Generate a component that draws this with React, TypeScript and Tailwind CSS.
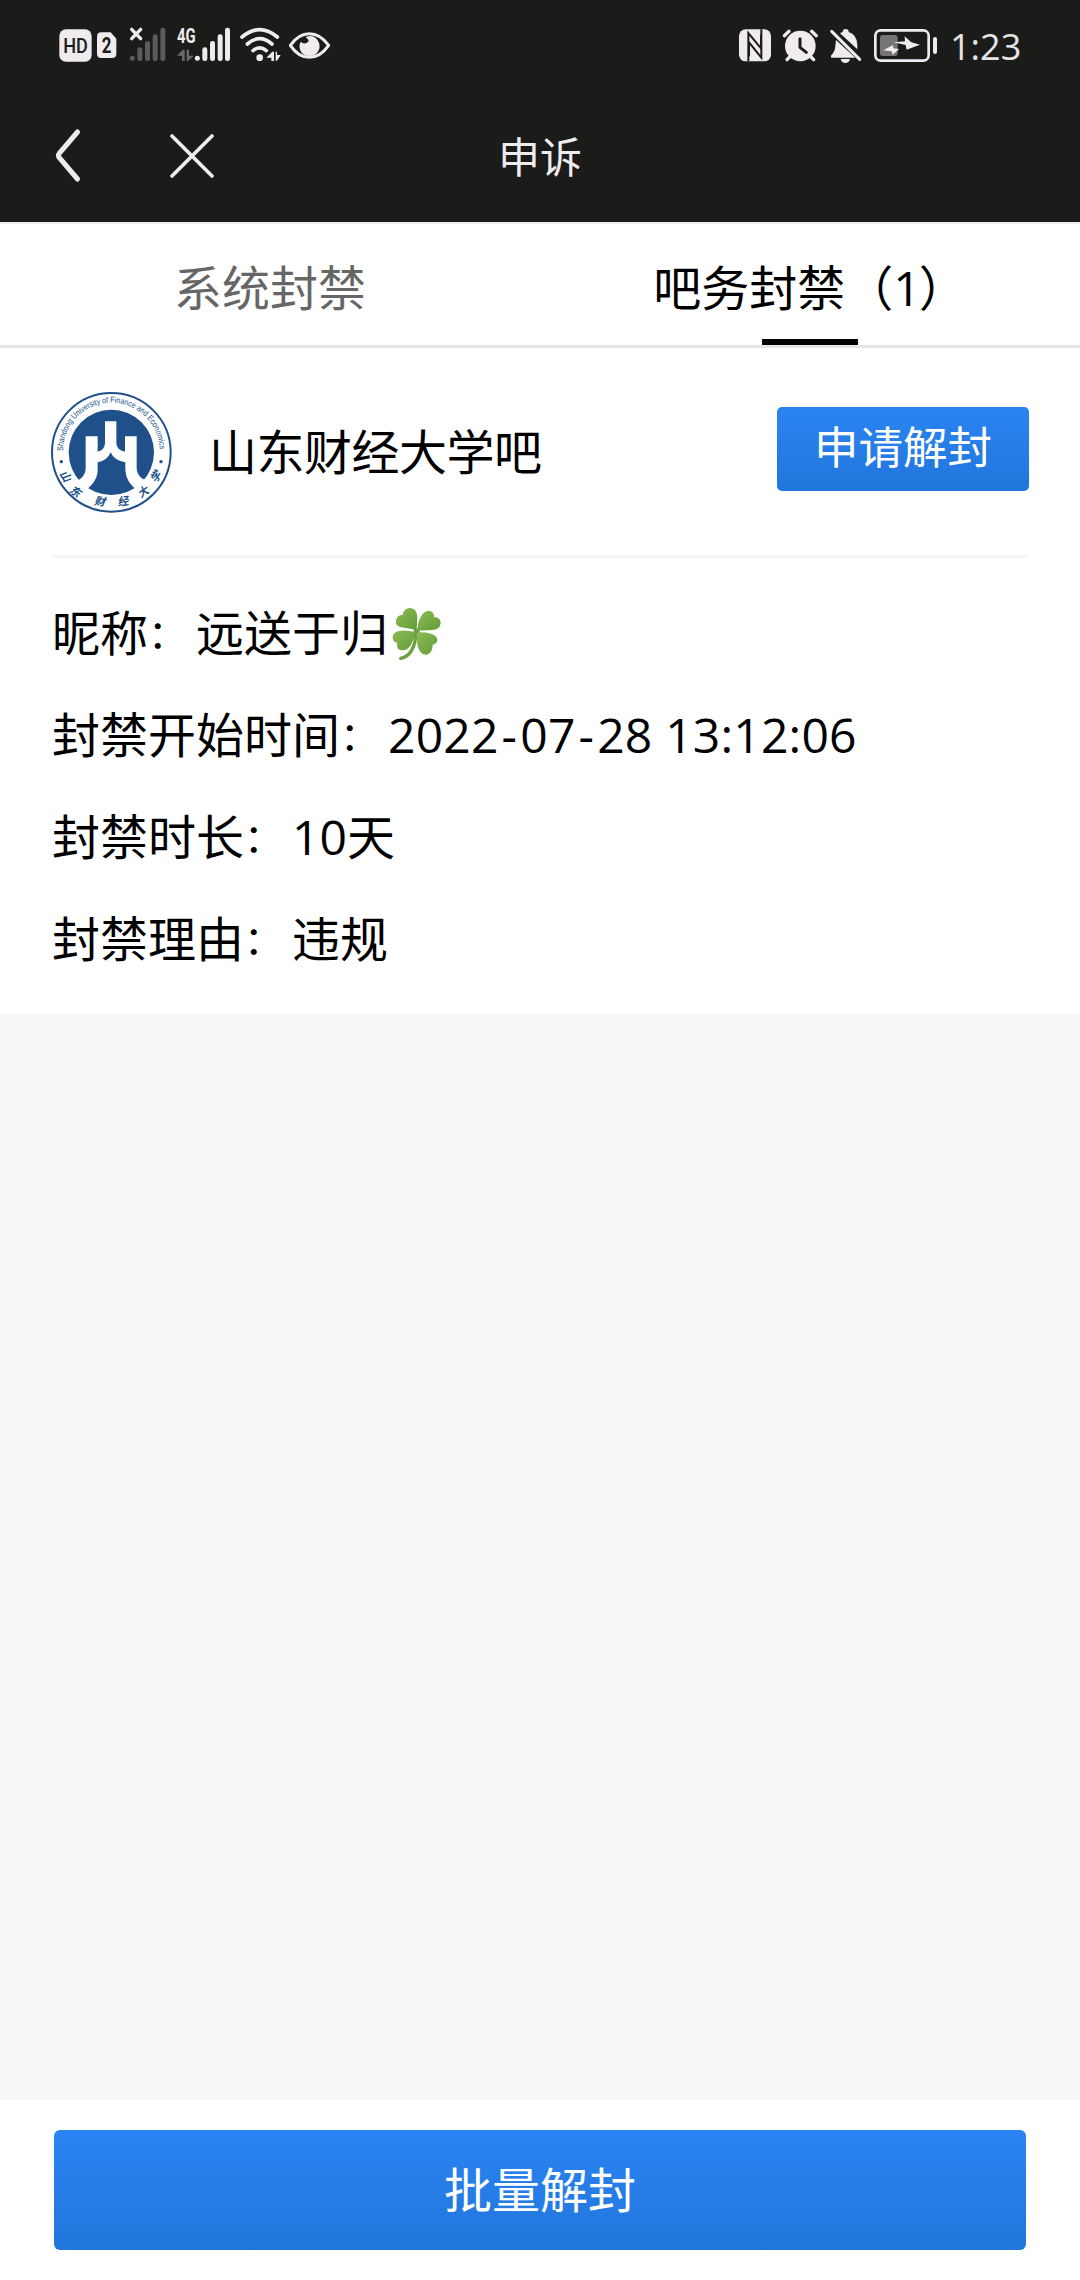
import type { ReactNode } from 'react';

interface StatusIconProps {
	label: string;
	viewBox: string;
	className: string;
	children: ReactNode;
}

function StatusIcon({ label, viewBox, className, children }: StatusIconProps) {
	return (
		<svg aria-label={label} viewBox={viewBox} className={`h-[60px] shrink-0 ${className}`} fill="#efebef">
			{children}
		</svg>
	);
}

function StatusBar() {
	return (
		<div className="flex items-start justify-between h-20 pt-[15px] pl-[57px] pr-[60px]">
			<div className="flex">
				<StatusIcon label="HD" viewBox="51 0 111 180" className="w-[37px]">
					<rect x="58" y="43" width="97" height="97" rx="20" />
					<text x="106.500" y="114" textAnchor="middle" textLength="74" lengthAdjust="spacingAndGlyphs" fontFamily="Roboto, sans-serif" fontWeight="500" fontSize="58" fill="#1b1c1a">HD</text>
				</StatusIcon>
				<StatusIcon label="SIM 2" viewBox="162 0 87 180" className="w-[29px]">
					<path d="M184 52h28l17 19v45q0 13-13 13h-32q-13 0-13-13V65q0-13 13-13z" />
					<text x="200" y="115" textAnchor="middle" fontFamily="Roboto, sans-serif" fontWeight="700" fontSize="64" textLength="29" lengthAdjust="spacingAndGlyphs" fill="#1b1c1a">2</text>
				</StatusIcon>
				<StatusIcon label="No signal" viewBox="249 0 144 180" className="w-[48px]">
					<g fill="#5b5b5a">
						<circle cx="277" cy="130" r="7.500" />
						<rect x="292" y="97" width="15" height="41" rx="7" />
						<rect x="315" y="78" width="15" height="60" rx="7" />
						<rect x="338" y="58" width="15" height="80" rx="7" />
						<rect x="361" y="38" width="15" height="100" rx="7" />
					</g>
					<path d="M275 43l27 28M302 43l-27 28" stroke="#efebef" strokeWidth="10" strokeLinecap="round" />
				</StatusIcon>
				<StatusIcon label="4G" viewBox="393 0 192 180" className="w-[64px]">
					<text x="411" y="83" textLength="56" lengthAdjust="spacingAndGlyphs" fontFamily="Roboto, sans-serif" fontWeight="700" fontSize="60">4G</text>
					<path d="M411 122l18-18h5v34h-8v-16zM440 104h7v18h14l-17 16h-4z" fill="#6b6a6b" />
					<circle cx="472" cy="130" r="7.500" />
					<rect x="487" y="97" width="15" height="41" rx="7" />
					<rect x="510" y="78" width="15" height="60" rx="7" />
					<rect x="533" y="58" width="15" height="80" rx="7" />
					<rect x="555" y="38" width="15" height="100" rx="7" />
				</StatusIcon>
				<StatusIcon label="Wi-Fi" viewBox="585 0 150 180" className="w-[50px]">
					<g fill="none" stroke="#efebef" strokeWidth="11" strokeLinecap="round">
						<path d="M606 66q53-44 106 0" />
						<path d="M622 87q37-32 74 0" />
						<path d="M639 107q20-17 40 0" />
					</g>
					<circle cx="659" cy="128" r="10" />
					<path d="M679 128l18-18h5v28h-8v-10zM707 110h4v10h11l-11 17h-4z" />
				</StatusIcon>
				<StatusIcon label="Eye comfort" viewBox="735 0 150 180" className="w-[50px]">
					<path d="M751 91q24-35 57-35t58 35q-25 36-58 36t-57-36z" fill="none" stroke="#efebef" strokeWidth="9" strokeLinejoin="round" />
					<path d="M797 67q18-9 31 3t10 31q-6 20-28 22-22 0-30-19-4-16 3-24 6 8 17 4 13-6-3-17z" />
				</StatusIcon>
			</div>

			<div className="flex">
				<StatusIcon label="NFC" viewBox="51 0 120 180" className="w-[40px]">
					<rect x="57" y="43" width="96" height="96" rx="20" />
					<path d="M85 139V54l38 46V59" fill="none" stroke="#1b1c1a" strokeWidth="6" />
					<path d="M124 43v85L87 82v42" fill="none" stroke="#1b1c1a" strokeWidth="6" />
				</StatusIcon>
				<StatusIcon label="Alarm" viewBox="171 0 141 180" className="w-[47px]">
					<circle cx="241" cy="93" r="46" />
					<path d="M193 62l14-13M289 62l-14-13M201 134l14-14M281 134l-14-14" stroke="#efebef" strokeWidth="10" strokeLinecap="round" />
					<path d="M240 71v26l19 15" fill="none" stroke="#1b1c1a" strokeWidth="9" strokeLinecap="round" strokeLinejoin="round" />
				</StatusIcon>
				<StatusIcon label="Muted" viewBox="312 0 132 180" className="w-[44px]">
					<path d="M348 75l58 53h-72q-4-6 4-12 8-9 8-22zM360 55q4-3 8-4 0-9 9-9t9 9q25 8 26 38v14z" />
					<path d="M362 132h28q-3 12-14 12t-14-12z" />
					<path d="M335 49l84 84" stroke="#efebef" strokeWidth="9" strokeLinecap="round" />
				</StatusIcon>
				<StatusIcon label="Charging" viewBox="444 0 228 180" className="w-[76px]">
					<rect x="466" y="46" width="160" height="91" rx="16" fill="none" stroke="#efebef" strokeWidth="8" />
					<rect x="480" y="60" width="53" height="63" rx="8" fill="#777478" />
					<rect x="639" y="66" width="12" height="51" rx="6" />
					<path d="M490 106l29-16 1 10 17 2-19 17-3-10z" />
					<path d="M521 82l34-3-1-15 20 18 26 7-40 15-3-14z" />
				</StatusIcon>
				<span className="w-[76px] h-[60px] pl-[6px] leading-[63px] text-[36px] text-[#e6e3e6] whitespace-nowrap font-['Open_Sans',sans-serif]">1:23</span>
			</div>
		</div>
	);
}

function NavBar() {
	return (
		<div className="relative flex items-start h-[142px] pt-[46px] pl-[50px]">
			<button aria-label="返回" className="w-9 h-[60px]">
				<svg viewBox="0 0 36 60" className="w-full h-full" fill="none" stroke="#efebee" strokeWidth="5" strokeLinecap="round">
					<path d="M27.500 6L9.500 27Q7.500 29.500 9.500 32L27.500 53" />
				</svg>
			</button>
			<button aria-label="关闭" className="w-[60px] h-[60px] ml-[76px]">
				<svg viewBox="0 0 60 60" className="w-full h-full" fill="none" stroke="#efebee" strokeWidth="3.700" strokeLinecap="round">
					<path d="M10 10l40 40M50 10L10 50" />
				</svg>
			</button>
			<h1 className="absolute inset-x-0 top-[47px] text-center text-[42px] leading-[60px] text-[#efebee]">申诉</h1>
		</div>
	);
}

const sealLetters = [
	{ char: '山', x: 76, y: 285, rotate: 55 },
	{ char: '东', x: 106, y: 331, rotate: 35 },
	{ char: '财', x: 179, y: 361, rotate: 8 },
	{ char: '经', x: 249, y: 361, rotate: -8 },
	{ char: '大', x: 309, y: 333, rotate: -35 },
	{ char: '学', x: 347, y: 287, rotate: -55 },
];

function SchoolSeal() {
	return (
		<svg viewBox="30 30 366 366" className="w-[122px] h-[122px] shrink-0" fill="#20508a">
			<circle cx="214" cy="214" r="178" fill="#fff" stroke="#20508a" strokeWidth="6" />
			<circle cx="214" cy="214" r="128" />
			<path
				fill="#fff"
				d="M137 166h36v46q22-6 22-27v-64h34v64q0 21 26 27v-46h35v96q2 32 40 40l-32 30q-42-28-42-66v-22q-34-5-44-30-10 25-39 30v22q0 38-43 66l-34-26q40-12 41-44z"
			/>
			<circle cx="64" cy="242" r="5" />
			<circle cx="363" cy="242" r="5" />
			<path id="seal-arc" d="M69 210A145 145 0 0 1 359 210" fill="none" />
			<text fontFamily="Liberation Sans, sans-serif" fontSize="25" textLength="450" lengthAdjust="spacingAndGlyphs">
				<textPath href="#seal-arc">Shandong University of Finance and Economics</textPath>
			</text>
			{sealLetters.map(({ char, x, y, rotate }) => (
				<text key={char} x={x} y={y + 12} textAnchor="middle" fontSize="33" fontWeight="700" fontStyle="italic" transform={`rotate(${rotate} ${x} ${y})`}>
					{char}
				</text>
			))}
		</svg>
	);
}

function Clover() {
	return (
		<svg aria-label="🍀" viewBox="24 8 162 180" className="w-[54px] h-[60px]">
			<defs>
				<linearGradient id="leaf" x1="0" y1="0" x2="1" y2="1">
					<stop offset="0" stopColor="#8dbd52" />
					<stop offset="1" stopColor="#629a3b" />
				</linearGradient>
			</defs>
			<path d="M107 98q0 32-12 52-12 20-33 24" fill="none" stroke="#6d9f45" strokeWidth="10" strokeLinecap="round" />
			<circle cx="110" cy="93" r="9" fill="#6d9f45" />
			<g fill="url(#leaf)">
				<path d="M109 89q-20-4-46-8-18-4-15-21 3-16 20-17 4-20 22-20 20 1 22 26 0 22-3 40z" />
				<path d="M112 90q0-22 10-40 10-20 27-19 14 4 13 19 20 2 20 18-2 20-25 21-22 2-45 1z" />
				<path d="M107 96q-21-6-43-5-24 1-26 18-1 16 14 18-4 18 9 22 20 4 32-16 8-14 14-37z" />
				<path d="M113 96q22-1 40 4 20 6 19 20-2 12-14 13 0 24-17 30-18 3-27-22-6-20-1-45z" />
			</g>
		</svg>
	);
}

interface InfoRowProps {
	label: string;
	children: ReactNode;
}

function InfoRow({ label, children }: InfoRowProps) {
	return (
		<div className="flex items-center h-[102px] whitespace-nowrap">
			<span>{label}</span>
			<span className="w-12 text-[39px]">：</span>
			{children}
		</div>
	);
}

function DateText({ value }: { value: string }) {
	const parts = value.split('-');

	return (
		<span className="tracking-[0.2px]">
			{parts.map((part, i) => (
				<span key={i}>
					{i > 0 && <span className="mx-[3px]">-</span>}
					{part}
				</span>
			))}
		</span>
	);
}

export default function App() {
	return (
		<div className="flex flex-col h-[2280px] w-[1080px] bg-[#f7f7f7] text-black text-[48px] font-['Open_Sans','Noto_Sans_CJK_SC',sans-serif]">
			<header className="bg-[#1b1c1a]">
				<StatusBar />
				<NavBar />
			</header>

			<nav className="flex h-[126px] bg-white border-t-[2px] border-t-[#f0eef0] border-b-[3px] border-b-[#e6e6e6]">
				<button className="flex-1 leading-[128px] h-[121px] text-[#666]">系统封禁</button>
				<button className="relative flex-1 leading-[128px] h-[121px]">
					吧务封禁（1<span className="-ml-[2px]">）</span>
					<span className="absolute bottom-0 left-1/2 -translate-x-1/2 w-24 h-[6px] bg-black" />
				</button>
			</nav>

			<main className="h-[666px] px-[52px] bg-white">
				<div className="flex items-center h-[210px] border-b-[3px] border-[#f5f5f5]">
					<div className="-ml-[2px]">
						<SchoolSeal />
					</div>
					<h2 className="flex-1 ml-[37px] tracking-[-0.5px]">山东财经大学吧</h2>
					<button className="w-[252px] h-[84px] mb-[6px] -mr-px rounded-[5px] bg-linear-to-b from-[#2b84f3] to-[#2176db] text-white text-[44.500px] leading-[80px] pb-1">申请解封</button>
				</div>
				<div className="pt-[24px]">
					<InfoRow label="昵称">
						远送于归
						<Clover />
					</InfoRow>
					<InfoRow label="封禁开始时间">
						<DateText value="2022-07-28 13:12:06" />
					</InfoRow>
					<InfoRow label="封禁时长">10天</InfoRow>
					<InfoRow label="封禁理由">违规</InfoRow>
				</div>
			</main>

			<footer className="mt-auto h-[180px] px-[54px] pt-[30px] bg-white">
				<button className="w-full h-[120px] rounded-[6px] bg-linear-to-b from-[#2b84f3] to-[#2176db] text-white">批量解封</button>
			</footer>
		</div>
	);
}
